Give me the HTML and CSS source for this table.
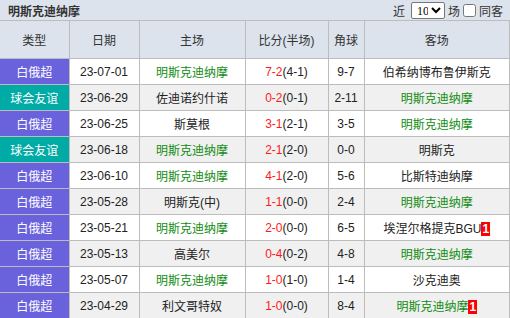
FILE: index.html
```html
<!DOCTYPE html>
<html>
<head>
<meta charset="utf-8">
<link rel="stylesheet" href="styles.css">
</head>
<body>
<div class="bar">
  <span class="title">明斯克迪纳摩</span>
  <div class="ctrl">
    <span>近</span>
    <select class="sel"><option>10</option></select>
    <span>场</span>
    <input type="checkbox" class="chk">
    <span>同客</span>
    <span class="cut"></span>
  </div>
</div>
<table class="tbl">
  <colgroup>
    <col class="c1"><col class="c2"><col class="c3"><col class="c4"><col class="c5"><col>
  </colgroup>
  <thead>
    <tr><th>类型</th><th>日期</th><th>主场</th><th>比分(半场)</th><th>角球</th><th>客场</th></tr>
  </thead>
  <tbody>
    <tr class="w"><td class="lg p">白俄超</td><td>23-07-01</td><td class="g">明斯克迪纳摩</td><td><span class="r">7-2</span>(4-1)</td><td>9-7</td><td>伯希纳博布鲁伊斯克</td></tr>
    <tr class="k"><td class="lg t">球会友谊</td><td>23-06-29</td><td>佐迪诺约什诺</td><td><span class="r">0-2</span>(0-1)</td><td>2-11</td><td class="g">明斯克迪纳摩</td></tr>
    <tr class="w"><td class="lg p">白俄超</td><td>23-06-25</td><td>斯莫根</td><td><span class="r">3-1</span>(2-1)</td><td>3-5</td><td class="g">明斯克迪纳摩</td></tr>
    <tr class="k"><td class="lg t">球会友谊</td><td>23-06-18</td><td class="g">明斯克迪纳摩</td><td><span class="r">2-1</span>(2-0)</td><td>0-0</td><td>明斯克</td></tr>
    <tr class="w"><td class="lg p">白俄超</td><td>23-06-10</td><td class="g">明斯克迪纳摩</td><td><span class="r">4-1</span>(2-0)</td><td>5-6</td><td>比斯特迪纳摩</td></tr>
    <tr class="k"><td class="lg p">白俄超</td><td>23-05-28</td><td>明斯克(中)</td><td><span class="r">1-1</span>(0-0)</td><td>2-4</td><td class="g">明斯克迪纳摩</td></tr>
    <tr class="w"><td class="lg p">白俄超</td><td>23-05-21</td><td class="g">明斯克迪纳摩</td><td><span class="r">2-0</span>(0-0)</td><td>6-5</td><td>埃涅尔格提克BGU<span class="badge">1</span></td></tr>
    <tr class="k"><td class="lg p">白俄超</td><td>23-05-13</td><td>高美尔</td><td><span class="r">0-4</span>(0-2)</td><td>4-8</td><td class="g">明斯克迪纳摩</td></tr>
    <tr class="w"><td class="lg p">白俄超</td><td>23-05-07</td><td class="g">明斯克迪纳摩</td><td><span class="r">1-0</span>(1-0)</td><td>1-4</td><td>沙克迪奥</td></tr>
    <tr class="k"><td class="lg p">白俄超</td><td>23-04-29</td><td>利文哥特奴</td><td><span class="r">1-0</span>(0-0)</td><td>8-4</td><td class="g">明斯克迪纳摩<span class="badge">1</span></td></tr>
  </tbody>
</table>
</body>
</html>
```
FILE: styles.css
```css
html, body {
  margin: 0;
  padding: 0;
  background: #dce3ec;
  font-family: "Liberation Sans", "Noto Sans CJK SC", sans-serif;
  font-size: 12px;
  color: #333;
  overflow: hidden;
}
.bar {
  height: 20px;
  display: flex;
  align-items: center;
  justify-content: space-between;
  padding-left: 8px;
  background: #dce3ec;
}
.title {
  font-weight: bold;
  color: #333;
  font-size: 12px;
}
.ctrl {
  display: flex;
  align-items: center;
  gap: 3px;
  margin-right: -6px;
  color: #333;
}
.sel {
  width: 34px;
  height: 17px;
  margin-left: 3px;
  font-size: 12px;
  padding: 0 0 0 1px;
  font-family: "Liberation Serif", serif;
  border: 1px solid #777;
  border-radius: 2px;
  background: #fff;
  color: #000;
}
.chk {
  margin: 0;
  width: 13px;
  height: 13px;
}
.cut {
  width: 6px;
  height: 12px;
  margin-left: 4px;
  background: #777;
  border-radius: 2px;
}
.tbl {
  width: 100%;
  border-collapse: collapse;
  table-layout: fixed;
  background: #fff;
}
.c1 { width: 69px; }
.c2 { width: 70px; }
.c3 { width: 106px; }
.c4 { width: 83px; }
.c5 { width: 36px; }
.tbl th {
  height: 37px;
  font-weight: normal;
  background: #dce3ec;
  border: 1px solid #bcbcbc;
  color: #333;
  padding: 0;
}
.tbl th:first-child { border-left: none; }
.tbl td {
  height: 25px;
  text-align: center;
  border: 1px solid #bcbcbc;
  padding: 0;
  white-space: nowrap;
  color: #222;
}
.tbl td:first-child { border-left: none; }
.w td { background: #fff; }
.k td { background: #f0f0f0; }
.tbl td.lg { color: #fff; }
.tbl td.p { background: #6a61dd; }
.tbl td.t { background: #00aaa5; }
.tbl td.g { color: #128c12; }
.r { color: #ff1a1a; }
.badge {
  display: inline-block;
  background: #f00;
  color: #fff;
  font-weight: bold;
  font-size: 12px;
  padding: 0 1px;
  line-height: 14px;
  vertical-align: middle;
}
```
